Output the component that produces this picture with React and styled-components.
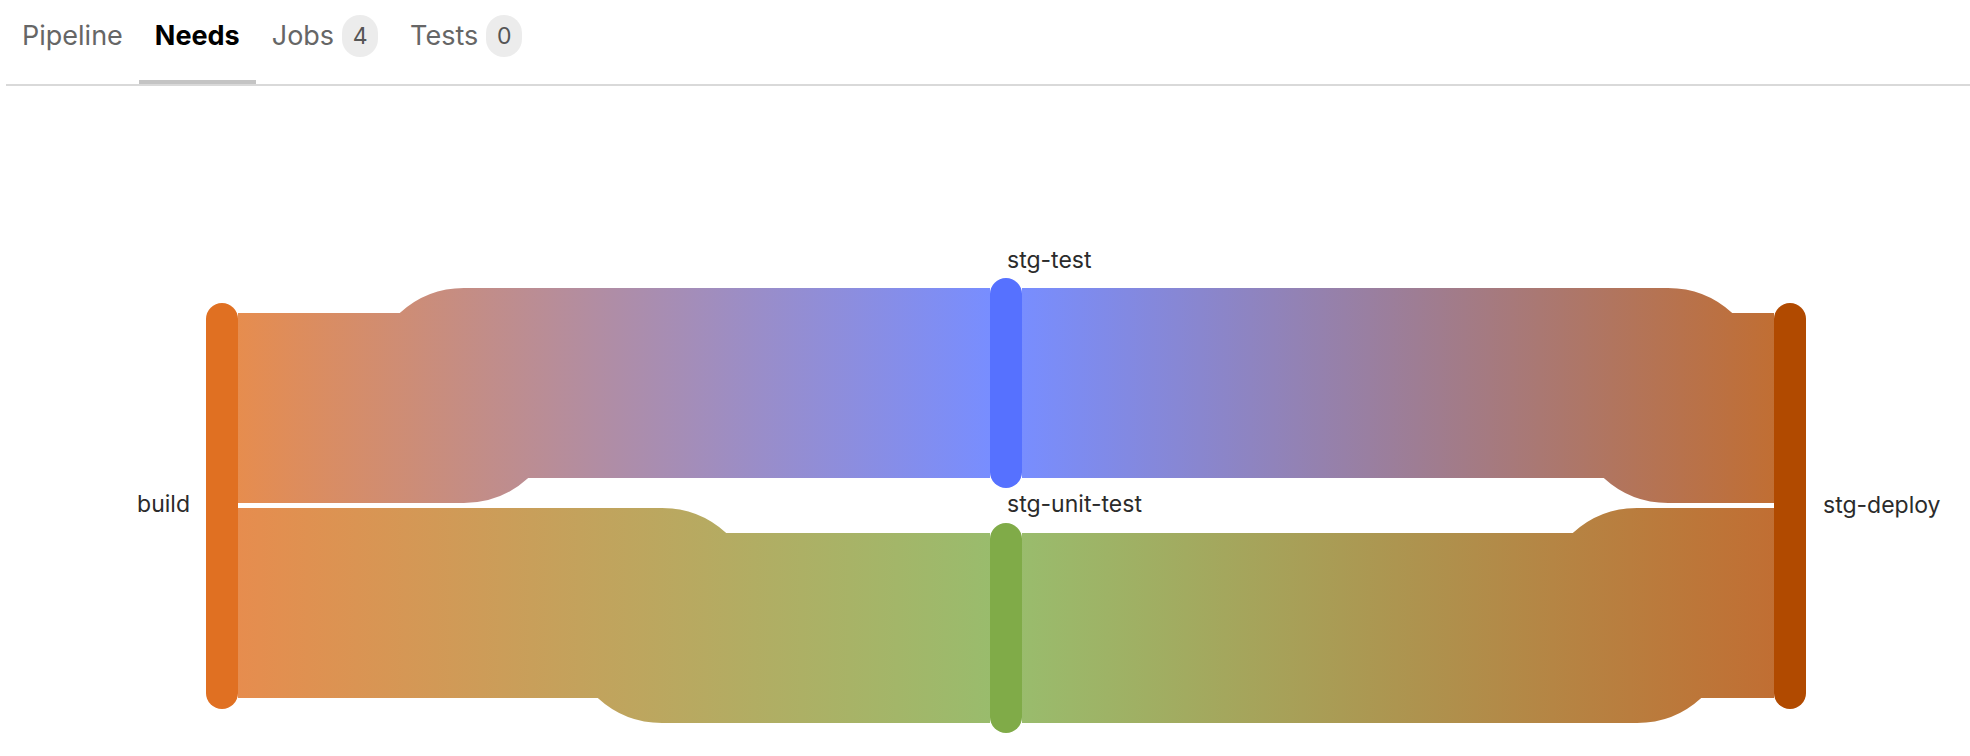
import styled, { createGlobalStyle } from 'styled-components'

const GlobalStyle = createGlobalStyle`
  html, body {
    margin: 0;
    padding: 0;
    background: #fff;
    overflow: hidden;
  }
  body {
    font-family: Inter, "Noto Sans", "Liberation Sans", sans-serif;
  }
`

const tabs = [
  { label: 'Pipeline' },
  { label: 'Needs', active: true },
  { label: 'Jobs', count: 4 },
  { label: 'Tests', count: 0 },
]

const nodes = [
  { id: 'build', x: 206, y: 303, h: 406, color: '#e07022', label: { x: 190, y: 506, anchor: 'end', base: 'middle' } },
  { id: 'stg-test', x: 990, y: 278, h: 210, color: '#5671ff', label: { x: 1007, y: 268, anchor: 'start', base: 'auto' } },
  { id: 'stg-unit-test', x: 990, y: 523, h: 210, color: '#80ab48', label: { x: 1007, y: 512, anchor: 'start', base: 'auto' } },
  { id: 'stg-deploy', x: 1774, y: 303, h: 406, color: '#b14a00', label: { x: 1823, y: 507, anchor: 'start', base: 'middle' } },
]

const links = [
  { from: '#e07022', to: '#5671ff', x0: 238, x1: 990, ys: 408, yt: 383, xs: 464 },
  { from: '#e07022', to: '#80ab48', x0: 238, x1: 990, ys: 603, yt: 628, xs: 662 },
  { from: '#5671ff', to: '#b14a00', x0: 1022, x1: 1774, ys: 383, yt: 408, xs: 1668 },
  { from: '#80ab48', to: '#b14a00', x0: 1022, x1: 1774, ys: 628, yt: 603, xs: 1637 },
]

const R = 95

// thick band that steps from ys to yt around xs, rounded like a fat stroke
const bandPath = ({ x0, x1, ys, yt, xs }) => {
  const d = Math.abs(ys - yt)
  const k = Math.sqrt(R * R - (R - d) * (R - d))
  if (yt < ys) {
    return `M${x0},${ys - R} H${xs - k} A${R} ${R} 0 0 1 ${xs},${yt - R} H${x1} V${yt + R} H${xs + k} A${R} ${R} 0 0 1 ${xs},${ys + R} H${x0} Z`
  }
  return `M${x0},${ys - R} H${xs} A${R} ${R} 0 0 1 ${xs + k},${yt - R} H${x1} V${yt + R} H${xs} A${R} ${R} 0 0 1 ${xs - k},${ys + R} H${x0} Z`
}

export default function App() {
  return (
    <>
      <GlobalStyle />
      <Page>
        <TabBar>
          {tabs.map(t => (
            <Tab key={t.label} $active={t.active}>
              <span>{t.label}</span>
              {t.count !== undefined && <Badge>{t.count}</Badge>}
            </Tab>
          ))}
        </TabBar>
        <Chart>
          <svg width="1970" height="670" viewBox="0 86 1970 670">
            <defs>
              {links.map((l, i) => (
                <linearGradient key={i} id={`lg${i}`} gradientUnits="userSpaceOnUse" x1={l.x0} y1="0" x2={l.x1} y2="0">
                  <stop offset="0" stopColor={l.from} />
                  <stop offset="1" stopColor={l.to} />
                </linearGradient>
              ))}
            </defs>
            {links.map((l, i) => (
              <path key={i} d={bandPath(l)} fill={`url(#lg${i})`} fillOpacity="0.8" />
            ))}
            {nodes.map(n => (
              <rect key={n.id} x={n.x} y={n.y} width="32" height={n.h} rx="16" fill={n.color} />
            ))}
            {nodes.map(n => (
              <NodeLabel key={n.id} x={n.label.x} y={n.label.y} textAnchor={n.label.anchor} dominantBaseline={n.label.base}>
                {n.id}
              </NodeLabel>
            ))}
          </svg>
        </Chart>
      </Page>
    </>
  )
}

const Page = styled.div`
  width: 1970px;
  height: 756px;
  overflow: hidden;
`

const TabBar = styled.div`
  display: flex;
  margin-left: 6px;
  height: 84px;
  border-bottom: 2px solid #d9d9d9;
`

const Tab = styled.div`
  position: relative;
  display: flex;
  align-items: center;
  gap: 8px;
  height: 84px;
  box-sizing: border-box;
  padding: 0 16px 13px;
  font-size: 27px;
  line-height: 32px;
  color: ${p => (p.$active ? '#000' : '#666')};
  font-weight: ${p => (p.$active ? 700 : 400)};
  &::after {
    content: '';
    display: ${p => (p.$active ? 'block' : 'none')};
    position: absolute;
    left: 0;
    right: 0;
    bottom: 0;
    height: 4px;
    background: #c4c4c4;
  }
`

const Badge = styled.span`
  display: inline-flex;
  align-items: center;
  justify-content: center;
  min-width: 36px;
  height: 42px;
  border-radius: 21px;
  background: #ececec;
  color: #555;
  font-size: 23px;
  font-weight: 400;
`

const Chart = styled.div`
  display: block;
  svg {
    display: block;
  }
`

const NodeLabel = styled.text`
  font-family: Inter, "Noto Sans", "Liberation Sans", sans-serif;
  font-size: 23px;
  fill: #2b2b2b;
`
